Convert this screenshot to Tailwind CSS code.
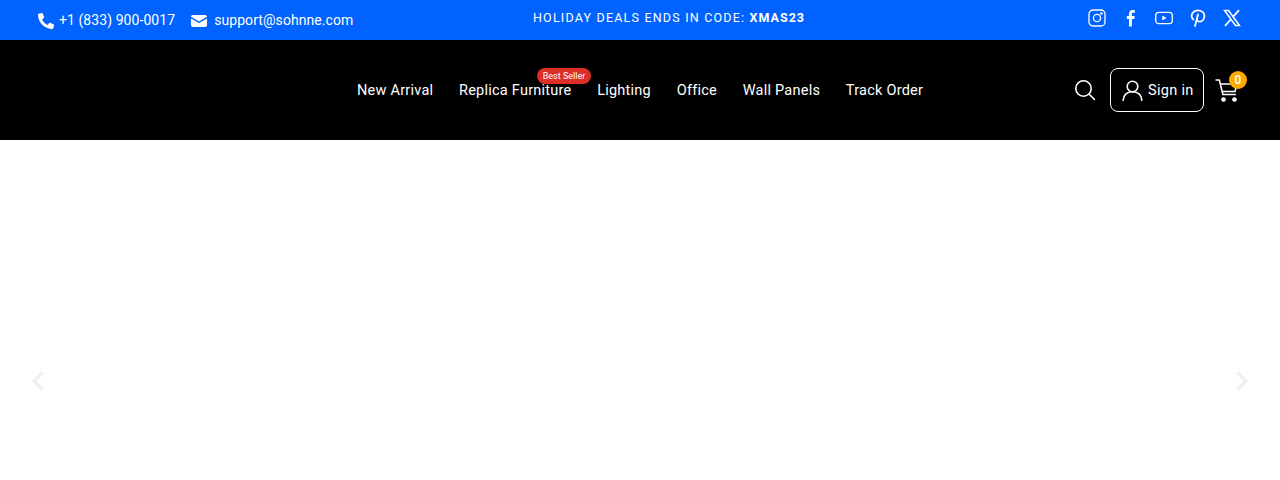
<!DOCTYPE html>
<html lang="en">
<head>
    <meta charset="UTF-8">
    <meta name="viewport" content="width=device-width, initial-scale=1.0">
    <title>Sohnne</title>
    <script src="https://cdn.jsdelivr.net/npm/@tailwindcss/browser@4"></script>
</head>
<body class="bg-white font-['Roboto',sans-serif] overflow-hidden">

    <!-- Top bar -->
    <div class="h-10 bg-[#0062ff] text-white flex items-center pl-[38px] pr-[40px]">
        <div class="w-[400px] flex items-center text-[14px] tracking-[0.07px] pt-[1px]">
            <svg class="w-4 h-4 mr-[5px]" viewBox="0 0 512 512" fill="#fff"><path transform="matrix(-1 0 0 1 512 0)" d="M493.4 24.6l-104-24c-11.3-2.6-22.9 3.3-27.5 13.9l-48 112c-4.2 9.8-1.4 21.3 6.9 28l60.6 49.6c-36 76.7-98.9 140.500-177.200 177.200l-49.600-60.600c-6.800-8.300-18.200-11.100-28-6.900l-112 48C3.900 366.500-2 378.100.6 389.400l24 104C27.100 504.200 36.700 512 48 512c256.100 0 464-207.500 464-464 0-11.200-7.700-20.900-18.600-23.400z"/></svg>
            <span>+1 (833) 900-0017</span>
            <svg class="w-4 h-4 ml-4 mr-[7px]" viewBox="0 0 16 16" fill="#fff"><path d="M2 2h12c1.100 0 2 .8 2 1.800L8 8.400 0 3.800C0 2.800.9 2 2 2Z"/><path d="M0 5.400V12c0 1.100.9 2 2 2h12c1.100 0 2-.9 2-2V5.400L8 10 0 5.400Z"/></svg>
            <span>support@sohnne.com</span>
        </div>
        <div class="w-[462px] text-center text-[12.5px] tracking-[1.2px] -mt-[4px]">HOLIDAY DEALS ENDS IN CODE: <b class="font-bold tracking-[1px]">XMAS23</b></div>
        <div class="flex-1 flex items-center justify-end gap-[15.5px] -mt-[4px]">
            <svg class="w-[18px] h-[18px]" viewBox="0 0 18 18" fill="none" stroke="#fff" stroke-width="1.3"><rect x="1" y="1" width="16" height="16" rx="4"/><circle cx="9" cy="9" r="3.6"/><circle cx="13.4" cy="4.6" r=".6" fill="#fff"/></svg>
            <svg class="w-[18px] h-[18px]" viewBox="0 0 18 18" fill="#fff"><path d="M7 17.500V10H4.800V7H7V5c0-2.600 1.500-4 3.700-4 1 0 1.800.1 2.100.1v2.700h-1.500c-1.200 0-1.400.6-1.400 1.400V7h2.800l-.4 3H9.900v7.500H7Z"/></svg>
            <svg class="w-[18px] h-[18px]" viewBox="0 0 18 18" fill="none" stroke="#fff" stroke-width="1.3"><rect x=".7" y="3.3" width="16.6" height="11.4" rx="3.2"/><path d="M7.300 6.500v5l4.200-2.500Z" fill="#fff" stroke="none"/></svg>
            <svg class="w-[18px] h-[18px]" viewBox="0 0 18 18" fill="none" stroke="#fff" stroke-width="1.8" stroke-linecap="round"><path d="M4.300 10.500C3.200 9.600 2.600 8.400 2.600 7c0-3.200 2.800-5.600 6.400-5.600s6.400 2.300 6.400 5.300c0 3.300-2 5.900-4.800 5.900-1.300 0-2.300-.6-2.700-1.500"/><path d="M9 5.500 6 17"/></svg>
            <svg class="w-[18px] h-[18px] overflow-visible" viewBox="0 0 18 18" fill="none" stroke="#fff"><g transform="translate(1 0)"><path d="M1.500 1.500h4l11 15h-4Z" stroke-width="1.5"/><path d="M16 1.200 10.200 7.700M7.700 10.500 2 16.800" stroke-width="1.8"/></g></svg>
        </div>
    </div>

    <!-- Header -->
    <header class="h-[100px] bg-black text-white flex items-center pl-[357px] pr-[40px]">
        <nav class="flex items-center gap-[25.7px] text-[14.5px] tracking-[0.24px] pt-[2px]">
            <a>New Arrival</a>
            <a class="relative">Replica Furniture
                <span class="absolute left-[78px] -top-[12px] h-4 w-[54px] rounded-full bg-[#dc2f27] text-[9px] tracking-normal leading-4 text-center">Best Seller</span>
            </a>
            <a>Lighting</a>
            <a>Office</a>
            <a>Wall Panels</a>
            <a>Track Order</a>
        </nav>
        <div class="ml-auto flex items-center">
            <svg class="w-[22px] h-[22px] mr-[14px]" viewBox="0 0 22 22" fill="none" stroke="#fff" stroke-width="1.6" stroke-linecap="round"><circle cx="9.5" cy="9.5" r="7.7"/><path d="m15.200 15.200 5.300 5.300"/></svg>
            <a class="h-11 w-[94px] border border-white rounded-lg flex items-center pl-[11px] text-[14.5px] tracking-[0.3px]">
                <svg class="w-[21px] h-[21px] mr-[5px]" viewBox="0 0 21 21" fill="none" stroke="#fff" stroke-width="1.6" stroke-linecap="round"><circle cx="10.5" cy="6.5" r="5.3"/><path d="M1.200 20.300c0-5 3.500-8.600 9.300-8.600s9.300 3.600 9.300 8.600"/></svg>
                <span class="pt-[2px]">Sign in</span>
            </a>
            <div class="relative ml-[11px] w-[25px] h-[25px]">
                <svg class="w-[25px] h-[25px]" viewBox="0 0 25 25" fill="none" stroke="#fff" stroke-width="1.5" stroke-linejoin="round"><path d="M.5 2h3.800l3.600 14.500h13"/><path d="M5 6h17l-2 7.500H7"/><circle cx="8.500" cy="21.500" r="1.600" fill="#fff"/><circle cx="19.500" cy="21.500" r="1.600" fill="#fff"/></svg>
                <span class="absolute -top-[7px] left-[14px] w-[18px] h-[18px] rounded-full bg-[#ffa800] text-[12px] font-medium leading-[18px] text-center">0</span>
            </div>
        </div>
    </header>

    <!-- Slider -->
    <main class="relative h-[340px] bg-white">
        <svg class="absolute left-[30px] top-[231px] w-4 h-5" viewBox="0 0 16 20" fill="none" stroke="#f0f0f0" stroke-width="3.5" stroke-linecap="round" stroke-linejoin="round"><path d="M12 2 4 10l8 8"/></svg>
        <svg class="absolute right-[30px] top-[231px] w-4 h-5" viewBox="0 0 16 20" fill="none" stroke="#f0f0f0" stroke-width="3.5" stroke-linecap="round" stroke-linejoin="round"><path d="m4 2 8 8-8 8"/></svg>
    </main>

</body>
</html>
